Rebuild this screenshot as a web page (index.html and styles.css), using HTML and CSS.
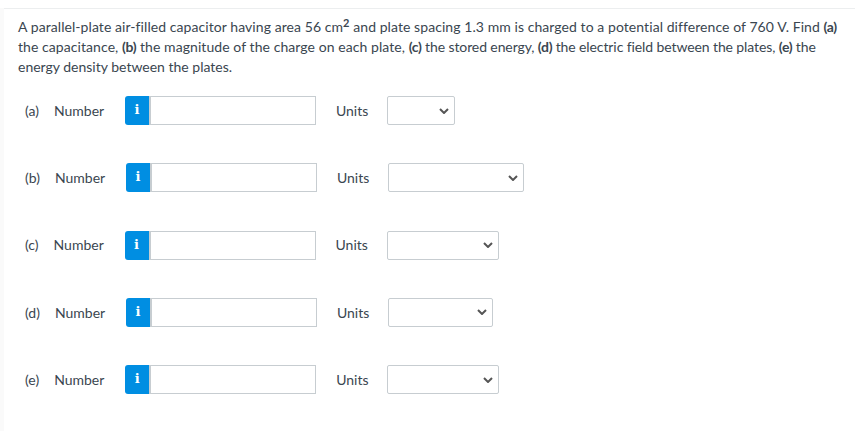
FILE: index.html
```html
<!DOCTYPE html>
<html lang="en">
<head>
  <meta charset="UTF-8" />
  <meta name="viewport" content="width=device-width, initial-scale=1.0"/>
  <title>Capacitor Question</title>
  <link rel="stylesheet" href="styles.css">
</head>
<body>
  <div class="question">
    <p class="prompt">A parallel-plate air-filled capacitor having area 56 cm<sup>2</sup> and plate spacing 1.3 mm is charged to a potential difference of 760 V. Find <b>(a)</b> the capacitance, <b>(b)</b> the magnitude of the charge on each plate, <span class="tight"><b>(c)</b> the stored energy, <b>(d)</b> the electric field between the plates, <b>(e)</b> the</span> <span class="plain">energy density between the plates.</span></p>

    <div class="answer">
      <span class="part">(a)</span>
      <span class="kind">Number</span>
      <button class="info">i</button>
      <input type="text" class="value" />
      <span class="units">Units</span>
      <select class="unit-select width-a"></select>
    </div>
    <div class="answer">
      <span class="part">(b)</span>
      <span class="kind">Number</span>
      <button class="info">i</button>
      <input type="text" class="value" />
      <span class="units">Units</span>
      <select class="unit-select width-b"></select>
    </div>
    <div class="answer">
      <span class="part">(c)</span>
      <span class="kind">Number</span>
      <button class="info">i</button>
      <input type="text" class="value" />
      <span class="units">Units</span>
      <select class="unit-select width-c"></select>
    </div>
    <div class="answer">
      <span class="part">(d)</span>
      <span class="kind">Number</span>
      <button class="info">i</button>
      <input type="text" class="value" />
      <span class="units">Units</span>
      <select class="unit-select width-d"></select>
    </div>
    <div class="answer">
      <span class="part">(e)</span>
      <span class="kind">Number</span>
      <button class="info">i</button>
      <input type="text" class="value" />
      <span class="units">Units</span>
      <select class="unit-select width-c"></select>
    </div>
  </div>
</body>
</html>
```

FILE: styles.css
```css
body {
  margin: 0;
  height: 431px;
  overflow: hidden;
  font-family: 'Lato', sans-serif;
  font-size: 14px;
  color: #3a4650;
  background: #fff;
  padding-top: 8px;
  box-sizing: border-box;
}

.question {
  margin-left: 4px;
  border-top: 1px solid #eceeef;
  padding: 8px 14px 0 14px;
  height: 422px;
  box-shadow: -4px 0 0 #fafafa;
}

.prompt {
  margin: 0 0 19px 0;
  line-height: 20px;
  width: 825px;
  letter-spacing: 0.07px;
}

.prompt sup {
  font-size: 11px;
  font-weight: 700;
  line-height: 0;
  vertical-align: 5px;
}

.prompt b {
  font-weight: 700;
  letter-spacing: -0.3px;
}

.tight {
  letter-spacing: -0.1px;
}

.plain {
  letter-spacing: 0;
}

.answer {
  display: flex;
  align-items: center;
  height: 29px;
  margin-bottom: 38.3px;
  padding-left: 7px;
}

.part {
  margin-right: 15px;
  margin-bottom: 0.4px;
}

.kind {
  width: 71px;
  margin-bottom: 0.4px;
}

.info {
  width: 24px;
  height: 29px;
  padding: 0 0 2px 0;
  border: none;
  border-radius: 3px 0 0 3px;
  background: #008ee2;
  color: #fff;
  font-family: 'DejaVu Serif', serif;
  font-size: 13px;
  font-weight: 700;
}

.value {
  width: 167px;
  height: 29px;
  box-sizing: border-box;
  border: 1px solid #c7cdd1;
  border-left-width: 2px;
  background: #fff;
}

.units {
  width: 51px;
  margin-left: 20px;
  margin-bottom: 0.4px;
}

.unit-select {
  height: 29px;
  box-sizing: border-box;
  border: 1px solid #c7cdd1;
  border-radius: 2px;
  appearance: none;
  background: #fff url("data:image/svg+xml,%3Csvg xmlns='http://www.w3.org/2000/svg' width='10' height='6'%3E%3Cpath d='M1 1l4 4 4-4' fill='none' stroke='%23555' stroke-width='2'/%3E%3C/svg%3E") no-repeat right 5px center;
}

.width-a { width: 68px; }
.width-b { width: 136px; }
.width-c { width: 112px; }
.width-d { width: 105px; }
```
